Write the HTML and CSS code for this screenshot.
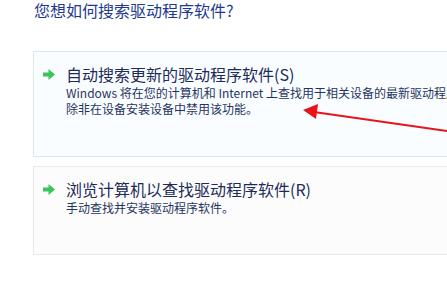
FILE: index.html
```html
<!DOCTYPE html>
<html lang="zh-CN">

<head>
    <meta charset="UTF-8">
    <title>更新驱动程序软件</title>
    <link rel="stylesheet" href="styles.css">
</head>

<body>
    <div class="wizard">
        <h1 class="title">您想如何搜索驱动程序软件?</h1>

        <div class="option option-auto">
            <svg class="go" width="12" height="11" viewBox="0 0 12 11">
                <path d="M0 3.5h5.5V0L12 5.5 5.5 11V7.5H0z" fill="#3cc45a"/>
            </svg>
            <div class="option-text">
                <div class="option-head">自动搜索更新的驱动程序软件(S)</div>
                <p class="option-desc">Windows 将在您的计算机和 Internet 上查找用于相关设备的最新驱动程序软件，<br>除非在设备安装设备中禁用该功能。</p>
            </div>
        </div>

        <div class="option option-browse">
            <svg class="go" width="12" height="11" viewBox="0 0 12 11">
                <path d="M0 3.5h5.5V0L12 5.5 5.5 11V7.5H0z" fill="#3cc45a"/>
            </svg>
            <div class="option-text">
                <div class="option-head">浏览计算机以查找驱动程序软件(R)</div>
                <p class="option-desc">手动查找并安装驱动程序软件。</p>
            </div>
        </div>
    </div>

    <!-- annotation arrow drawn over the screenshot -->
    <svg class="pointer" width="447" height="284" viewBox="0 0 447 284">
        <line x1="447" y1="131" x2="314" y2="112" stroke="#e8141a" stroke-width="2"/>
        <path d="M303 110 L318 104 L316 119 Z" fill="#e8141a"/>
    </svg>
</body>

</html>
```

FILE: styles.css
```css
* {
    margin: 0;
    padding: 0;
    box-sizing: border-box;
}

html,
body {
    width: 447px;
    height: 284px;
    overflow: hidden;
}

body {
    position: relative;
    background: #fff;
    font-family: "Noto Sans CJK SC", sans-serif;
}

.wizard {
    padding-left: 33px;
    width: 470px;
}

.title {
    font-size: 16px;
    font-weight: normal;
    line-height: 20px;
    color: #1e3a8e;
    padding-left: 1px;
    margin-bottom: 31px;
}

.option {
    display: flex;
    align-items: flex-start;
    padding: 12px 0 0 9px;
    border: 1px solid #dbe8ee;
    background-color: #fafdff;
}

.option-auto {
    height: 106px;
    margin-bottom: 9px;
}

.option-browse {
    height: 89px;
    background-color: #fcfcfc;
    border-color: #e6e8ea;
}

.go {
    flex-shrink: 0;
    margin-top: 5px;
}

.option-text {
    margin-left: 11px;
    white-space: nowrap;
}

.option-head {
    font-size: 16px;
    line-height: 20px;
    color: #1c2b57;
}

.option-desc {
    font-size: 12px;
    line-height: 16px;
    color: #1f3460;
    margin-top: 1px;
}

.pointer {
    position: absolute;
    left: 0;
    top: 0;
}
```
